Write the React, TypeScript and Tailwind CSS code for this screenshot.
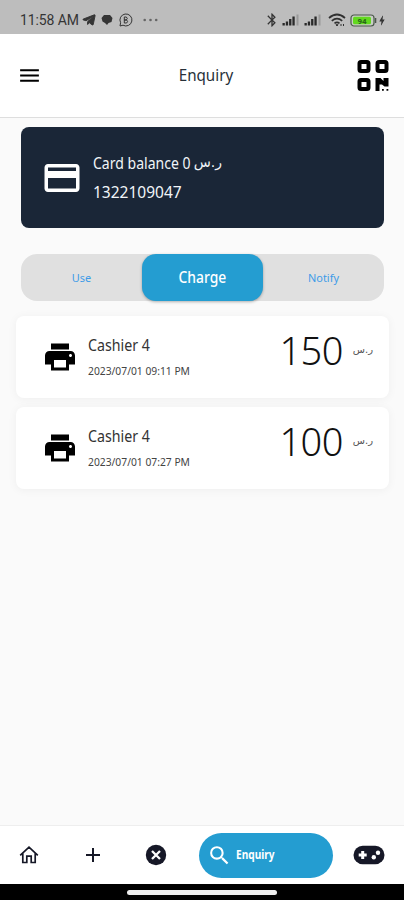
import { FaTelegramPlane } from 'react-icons/fa';
import { MdAdd, MdBluetooth, MdBolt, MdCreditCard, MdMenu, MdPrint, MdSearch } from 'react-icons/md';

interface Transaction {
  title: string;
  date: string;
  amount: number;
}

const TRANSACTIONS: Transaction[] = [
  { title: 'Cashier 4', date: '2023/07/01 09:11 PM', amount: 150 },
  { title: 'Cashier 4', date: '2023/07/01 07:27 PM', amount: 100 },
];

function Signal() {
  return (
    <svg viewBox="0 0 18 12" className="w-[18px] h-3 shrink-0" fill="#292929">
      <rect x="0.5" y="9" width="2.3" height="2.5" />
      <rect x="3.8" y="7.5" width="2.3" height="4" />
      <rect x="7.1" y="5" width="2.3" height="6.5" />
      <rect x="10.4" y="2.5" width="2.3" height="9" />
      <rect x="14.5" y="0.5" width="2" height="11" fill="#999" />
    </svg>
  );
}

function Wifi() {
  return (
    <svg viewBox="0 0 18 14" className="w-[18px] h-3.5 shrink-0" fill="none" stroke="#303030" strokeWidth="1.7">
      <path d="M1 5q8-7 16 0M3.8 7.8q5.2-4.5 10.4 0M6.5 10.3q2.5-2 5 0" />
      <path d="M8 11.7h2l-1 1.3zM13 11v2M15.5 11v2" strokeWidth="1" />
    </svg>
  );
}

function StatusBar() {
  return (
    <div className="h-[34px] shrink-0 bg-[#bdbdbd] pt-1.5 pl-5 pr-[17px] flex items-center justify-between text-[#353535]">
      <div className="flex items-center">
        <span className="w-[59px] text-[14px] tracking-[-0.1px] whitespace-nowrap font-['Roboto',sans-serif]">11:58 AM</span>
        <FaTelegramPlane className="w-[14px] h-[14px] ml-[3px]" stroke="currentColor" strokeWidth="35" />
        <svg viewBox="0 0 12 12" className="w-3 h-3 ml-[5px]" fill="currentColor">
          <path d="M3 1h6l2.5 3-1 4-3 1-1.5 2-2-2L1.5 7.5 0.5 4z" />
        </svg>
        <svg viewBox="0 0 14 14" className="w-3.5 h-3.5 ml-[6px]" fill="none" stroke="currentColor">
          <path d="M1 13l.6-3.3A6 6 0 1 1 4 12.2z" />
          <path d="M5.3 4v6M5.3 4h2q2 1.4 0 3h-2M5.3 7h2.3q2 1.6 0 3H5.3" />
        </svg>
        <svg viewBox="0 0 15 4" className="w-[15px] h-1 ml-[10px]" fill="#666">
          <circle cx="1.7" cy="2" r="1.3" />
          <circle cx="7.5" cy="2" r="1.3" />
          <circle cx="13.2" cy="2" r="1.3" />
        </svg>
      </div>
      <div className="flex items-center">
        <MdBluetooth className="w-4 h-4 mr-0.5" />
        <Signal />
        <span className="w-1" />
        <Signal />
        <span className="w-1.5" />
        <Wifi />
        <svg viewBox="0 0 27 13" className="w-[27px] h-[13px] ml-1">
          <rect x="1" y="1" width="23" height="11" rx="3" fill="#c8cfc4" stroke="#4b574b" strokeWidth="1.2" />
          <rect x="3" y="2.8" width="18" height="7.5" rx="1.5" fill="#62d91f" />
          <path d="M25.6 4v5" stroke="#4b574b" strokeWidth="1.4" />
          <text x="12" y="9.5" textAnchor="middle" fontSize="8" fontWeight="700" fontFamily="Roboto, sans-serif" fill="#28651a">94</text>
        </svg>
        <MdBolt className="w-[10px] h-[13px] scale-125" />
      </div>
    </div>
  );
}

function QrIcon() {
  return (
    <svg viewBox="0 0 34 34" className="w-[34px] h-[34px]" fill="none" stroke="black" strokeWidth="4">
      <rect x="3.5" y="3" width="9" height="9" rx="1.5" />
      <rect x="21.5" y="3" width="9" height="9" rx="1.5" />
      <rect x="3.5" y="21" width="9" height="9" rx="1.5" />
      <path d="M19.5 19h5l3 3V19h5v8.5h-4l-2.5-2h-2.5V32h-4zM26 30h1.8v1.8H26zM30.5 30h1.8v1.8h-1.8z" fill="black" stroke="none" />
    </svg>
  );
}

function HomeIcon() {
  return (
    <svg viewBox="0 0 20 20" className="w-5 h-5 ml-[19px]" fill="none" stroke="currentColor" strokeWidth="1.7">
      <path d="M1.2 10.3L10 2.2l8.8 8.1M3.8 8.5v9h4v-6.3h4.4v6.3h4v-9" />
    </svg>
  );
}

function CloseIcon() {
  return (
    <svg viewBox="0 0 22 22" className="w-[22px] h-[22px] ml-[40px]">
      <circle cx="11" cy="11" r="10.2" fill="currentColor" />
      <path d="M7 7l8 8M15 7l-8 8" stroke="white" strokeWidth="2.3" />
    </svg>
  );
}

function GamepadIcon() {
  return (
    <svg viewBox="0 0 32 20" className="w-8 h-5 ml-5">
      <rect x="0.5" y="0.8" width="31" height="18.4" rx="9.2" fill="currentColor" />
      <path d="M9.7 6v8M5.7 10h8" stroke="white" strokeWidth="3" />
      <circle cx="20.8" cy="12.3" r="2.2" fill="white" />
      <circle cx="25" cy="7.7" r="2.2" fill="white" />
    </svg>
  );
}

function TransactionCard({ item }: { item: Transaction }) {
  return (
    <div className="h-[82px] bg-white rounded-lg shadow-[0_1px_10px_rgba(0,0,0,0.05)] flex items-start pl-[26px] pr-4">
      <MdPrint className="w-9 h-9 mt-[23px] text-black" />
      <div className="ml-[10px] pt-[18px] w-[104px] whitespace-nowrap">
        <p className="text-[16.5px] leading-[22px] origin-left scale-x-[0.86] text-[#333]">{item.title}</p>
        <p className="mt-[8px] text-[10.5px] leading-[15px] origin-left scale-x-[0.98] text-[#444]">{item.date}</p>
      </div>
      <div className="ml-auto flex items-start">
        <span className="text-[38px] leading-[52px] tracking-[-0.5px] mt-[8px] text-[#111] font-['Noto_Sans',sans-serif] font-light">{item.amount}</span>
        <span dir="rtl" className="w-5 ml-[10px] mt-[26px] text-[10px] leading-[15px] text-[#555] whitespace-nowrap font-['DejaVu_Sans',sans-serif]">ر.س</span>
      </div>
    </div>
  );
}

export default function App() {
  return (
    <div className="w-[404px] h-[900px] bg-[#fafafa] flex flex-col overflow-hidden font-['Noto_Sans',sans-serif]">
      <StatusBar />

      <header className="h-[84px] shrink-0 bg-white border-b border-[#dedede] grid grid-cols-3 items-center pl-[17px] pr-[14px]">
        <MdMenu className="w-[25px] h-[25px] text-black" />
        <h1 className="text-center text-[16.5px] scale-x-[0.92] pl-1.5 text-[#273039]">Enquiry</h1>
        <div className="justify-self-end">
          <QrIcon />
        </div>
      </header>

      <main className="flex-1 pl-4 pr-[15px] pt-[9px]">
        <section className="mx-[5px] h-[101px] rounded-lg bg-[#1a2637] text-[#f1f5f8] flex items-center pl-[20px]">
          <MdCreditCard className="w-[42px] h-[42px] text-white" />
          <div className="ml-[10px] -mt-px whitespace-nowrap">
            <p className="text-[16.5px] leading-[29px] w-[101px] flex">
              <span className="origin-left scale-x-[0.85]">Card balance 0</span>
              <span dir="rtl" className="-ml-[14px] text-[14px] font-['DejaVu_Sans',sans-serif]">ر.س</span>
            </p>
            <p className="text-[16.5px] leading-[29px] origin-left scale-x-[0.94]">1322109047</p>
          </div>
        </section>

        <nav className="mx-[5px] mt-[26px] h-[47px] rounded-[16px] bg-[#e0e0e0] grid grid-cols-3 text-[#3d9be8]">
          <button className="text-[11.5px] scale-x-95">Use</button>
          <button className="bg-[#249dd1] text-white text-[16.5px] font-medium rounded-[14px] shadow-[0_1px_3px_rgba(0,0,0,0.3)]">
            <span className="inline-block scale-x-[0.84]">Charge</span>
          </button>
          <button className="text-[11.5px] scale-x-95">Notify</button>
        </nav>

        <div className="mt-[15px] flex flex-col gap-[9px]">
          {TRANSACTIONS.map(item => (
            <TransactionCard key={item.date} item={item} />
          ))}
        </div>
      </main>

      <footer className="h-[59px] shrink-0 bg-white border-t border-[#eee] flex items-center text-[#161827]">
        <HomeIcon />
        <MdAdd className="w-[24px] h-[24px] ml-[42px]" />
        <CloseIcon />
        <button className="w-[134px] h-[45px] ml-[32px] rounded-full bg-[#249dd1] text-white flex items-center pl-[8px]">
          <MdSearch className="w-[25px] h-[25px]" />
          <span className="ml-1 text-[11.5px] font-bold origin-left scale-x-[0.88]">Enquiry</span>
        </button>
        <GamepadIcon />
      </footer>
      <div className="h-4 shrink-0 bg-black flex items-center justify-center">
        <div className="w-[150px] h-[5px] rounded-full bg-[#eee]" />
      </div>
    </div>
  );
}
